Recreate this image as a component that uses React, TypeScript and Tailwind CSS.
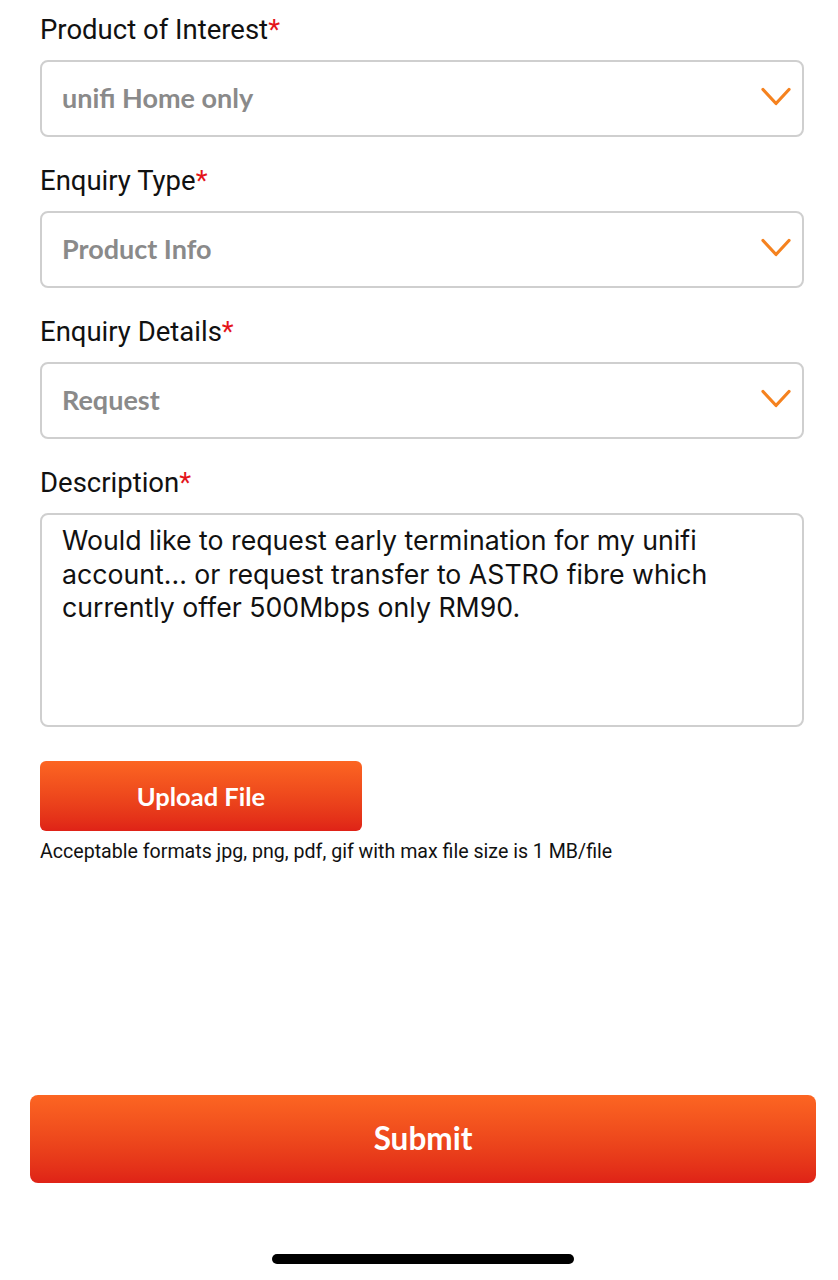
import React from "react";

function Chevron() {
  return (
    <svg width="30" height="20" viewBox="0 0 30 20" fill="none" className="shrink-0 -mt-[3px]">
      <path d="M2 2.5 L15 16.5 L28 2.5" stroke="#f5821f" strokeWidth="3.2" strokeLinecap="round" strokeLinejoin="round" />
    </svg>
  );
}

function Label({ text }: { text: string }) {
  return (
    <div className="font-['Roboto',sans-serif] text-[27.5px] leading-[32px] text-[#111] mb-[14px]">
      {text}
      <span className="text-[#e4141b]">*</span>
    </div>
  );
}

function SelectField({ label, value }: { label: string; value: string }) {
  return (
    <div className="mb-[28px]">
      <Label text={label} />
      <div className="flex items-center justify-between h-[77px] rounded-[8px] border-2 border-[#cfcfcf] pl-[20px] pr-[11px]">
        <span className="font-['Lato',sans-serif] font-bold text-[27px] text-[#8a8a8a]">{value}</span>
        <Chevron />
      </div>
    </div>
  );
}

export default function App() {
  return (
    <div className="w-[838px] h-[1280px] bg-white flex flex-col overflow-hidden">
      <div className="pl-[40px] pr-[34px] pt-[14px] w-full">
        <SelectField label="Product of Interest" value="unifi Home only" />
        <SelectField label="Enquiry Type" value="Product Info" />
        <SelectField label="Enquiry Details" value="Request" />

        <Label text="Description" />
        <div className="mt-[1px] h-[214px] rounded-[8px] border-2 border-[#cfcfcf] px-[20px] pt-[9px] font-['Inter',sans-serif] text-[26.7px] leading-[33.5px] text-[#111]">
          Would like to request early termination for my unifi account... or request transfer to ASTRO fibre which currently offer 500Mbps only RM90.
        </div>

        <button className="mt-[34px] w-[322px] h-[70px] rounded-[6px] bg-gradient-to-b from-[#fc6522] to-[#df2217] text-white font-['Lato',sans-serif] font-bold text-[25.5px]">
          Upload File
        </button>
        <div className="mt-[9px] font-['Roboto',sans-serif] text-[19.6px] leading-[24px] text-[#111]">
          Acceptable formats jpg, png, pdf, gif with max file size is 1 MB/file
        </div>
      </div>

      <div className="flex-1" />

      <div className="pl-[30px] pr-[22px]">
        <button className="w-full h-[88px] rounded-[8px] bg-gradient-to-b from-[#fc6522] to-[#df2217] text-white font-['Lato',sans-serif] font-bold text-[31.5px]">
          Submit
        </button>
      </div>
      <div className="flex justify-center pl-[8px] pt-[71px] pb-[16px]">
        <div className="w-[302px] h-[10px] rounded-full bg-black" />
      </div>
    </div>
  );
}
